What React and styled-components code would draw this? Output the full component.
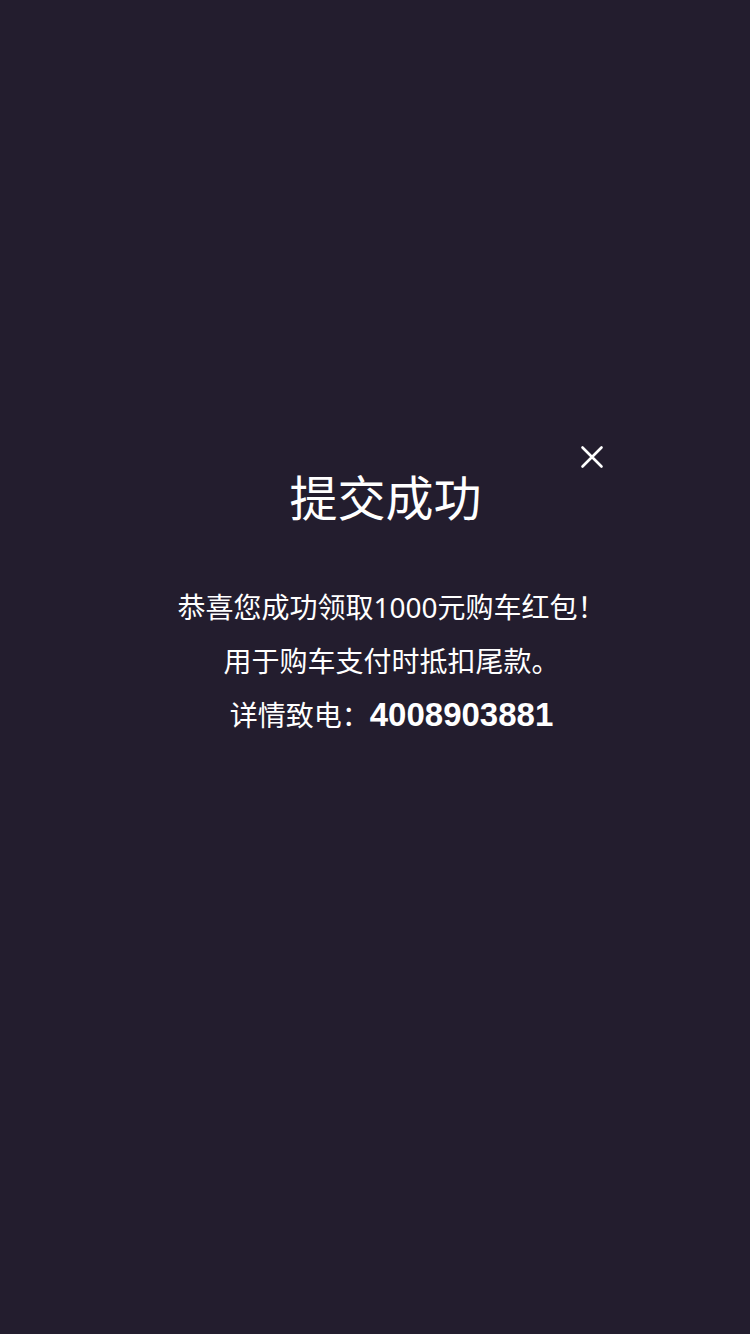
import React from 'react';
import styled, { createGlobalStyle } from 'styled-components';

const GlobalStyle = createGlobalStyle`
  html, body {
    margin: 0;
    padding: 0;
    background: #231d2e;
  }
  body {
    font-family: "Noto Sans", "Noto Sans CJK SC", sans-serif;
  }
`;

const App = () => {
  return (
    <Overlay>
      <GlobalStyle />
      <Dialog>
        <CloseButton aria-label="关闭">
          <svg width="24" height="24" viewBox="0 0 24 24">
            <path
              d="M2.5 2.5 L21.5 21.5 M21.5 2.5 L2.5 21.5"
              stroke="#fff"
              strokeWidth="2.6"
              strokeLinecap="round"
            />
          </svg>
        </CloseButton>
        <Title>提交成功</Title>
        <Body>
          <Line>恭喜您成功领取1000元购车红包！</Line>
          <Line>用于购车支付时抵扣尾款。</Line>
          <Line>
            详情致电：<Phone>4008903881</Phone>
          </Line>
        </Body>
      </Dialog>
    </Overlay>
  );
};
export default App;

const Overlay = styled.div`
  width: 750px;
  height: 1334px;
  background-color: #231d2e;
  display: flex;
  align-items: flex-start;
  justify-content: center;
  padding: 444px 0 0 21px;
  box-sizing: border-box;
`;

const Dialog = styled.div`
  position: relative;
  width: 460px;
  display: flex;
  flex-direction: column;
  align-items: center;
  color: #fff;
`;

const CloseButton = styled.button`
  position: absolute;
  top: 0;
  right: 11px;
  width: 26px;
  height: 26px;
  padding: 0;
  border: 0;
  background: transparent;
  display: flex;
  align-items: center;
  justify-content: center;
`;

const Title = styled.h1`
  margin: 21px 0 0;
  font-family: "Noto Sans CJK SC", sans-serif;
  font-size: 48px;
  font-weight: 400;
  line-height: 60px;
`;

const Body = styled.div`
  margin-top: 55px;
  padding-left: 12px;
  display: flex;
  flex-direction: column;
  align-items: center;
`;

const Line = styled.p`
  margin: 0;
  font-family: "Noto Sans", "Noto Sans CJK SC", sans-serif;
  font-size: 28px;
  line-height: 54px;
  white-space: nowrap;
`;

const Phone = styled.span`
  font-family: "Liberation Sans", sans-serif;
  font-size: 33px;
  font-weight: 700;
`;
